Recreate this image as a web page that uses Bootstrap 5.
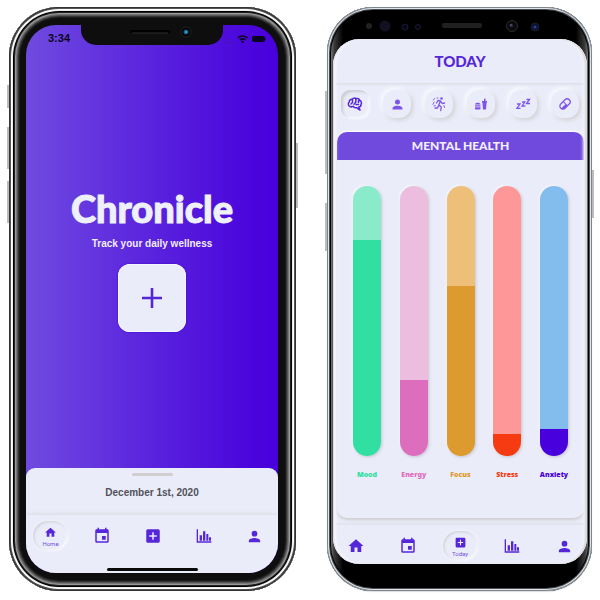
<!DOCTYPE html>
<html lang="en">
<head>
<meta charset="utf-8">
<meta name="viewport" content="width=device-width, initial-scale=1">
<title>Chronicle</title>
<link href="https://cdn.jsdelivr.net/npm/bootstrap@5.3.0/dist/css/bootstrap.min.css" rel="stylesheet">
<style>
:root { --violet: #5527d9; --soft: #eaecf9; }
body { background: #fff; font-family: Inter, "Liberation Sans", sans-serif; line-height: 1; }
.stage { min-height: 100vh; padding: 7px 8px 9px 9px; gap: 31px; grid-template-columns: 287fr 265fr; }
button { border: 0; background: none; padding: 0; color: inherit; line-height: 1; }
svg { display: block; }
.side-key { position: absolute; width: 2px; background: #b9bcc0; }
.display-face { font-family: Lato, sans-serif; font-weight: 900; margin: 0; line-height: 1; }

/* First phone */
.phone-a { border-radius: 50px; padding: 18px 18px 18px 17px; background: #0e0e0e;
  box-shadow: inset 0 0 0 1px #333, inset 0 0 0 2px #555, inset 0 0 0 3px #fff, inset 0 0 0 4px #eee, inset 0 0 0 5px #000,
    inset 0 0 0 6px #222, inset 0 0 0 7px #999, inset 0 0 0 8px #777, inset 0 0 0 9px #555, inset 0 0 0 10px #333, inset 0 0 0 11px #1c1c1c; }
.screen-a { border-radius: 30px; background: linear-gradient(90deg, #6f4be0, #5e2ade 40%, #4a05dc 90%, #4800dc); }
.notch { position: absolute; left: 50%; top: -1px; width: 142px; height: 21px; margin-left: -71px; background: #0e0e0e; border-radius: 0 0 15px 15px; }
.notch-svg { position: absolute; left: 0; top: 0; }
.status { height: 27px; padding: 0 12px 0 22px; color: #0b0420; }
.clock { font: 700 11px/13px "Liberation Sans", sans-serif; }
.brand { font-size: 38px; color: #eef0fb; -webkit-text-stroke: 1px #eef0fb; paint-order: stroke; stroke-linejoin: round; }
.tagline { font: 700 10px/12px "Liberation Sans", sans-serif; color: #f0edfc; margin: 11px 0 14px; }
.add-btn { width: 68px; height: 68px; border-radius: 12px; background: var(--soft); color: var(--violet); box-shadow: inset 0 0 0 1px #f4f5ff, 0 0 2px #3900c8; }
.sheet { background: var(--soft); border-radius: 9px 9px 0 0; height: 47px; padding-top: 5px; }
.grip { width: 41px; height: 3px; border-radius: 2px; background: #d0cecf; }
.sheet-date { font: 700 10px/14px "Liberation Sans", sans-serif; color: #515159; margin: 10px 0 0; }
.tabs-a { background: var(--soft); height: 58px; padding: 6px 6px 0 7px; box-shadow: 0 -1px 4px #d9d9e2; }
.home-bar { position: absolute; left: 50%; bottom: 2px; width: 91px; height: 3px; margin-left: -45px; border-radius: 2px; background: #090909; }

/* Tab buttons */
.tab-btn { width: 35px; height: 30px; color: var(--violet); }
.tab-btn.on { border-radius: 15px; box-shadow: inset 1px 1px 3px #cfcdd2, inset -1px -1px 2px #fff, 0 0 3px #f8f8ff; }
.tab-btn span { font: 6px/7px Roboto, sans-serif; color: #7750e0; margin-top: 1px; }

/* Second phone */
.phone-b { border-radius: 46px; padding: 32px 5px 27px 6px;
  background: linear-gradient(90deg, #777 4px, #3c3c3c 7px, #000 16px, #000 calc(100% - 16px), #3c3c3c calc(100% - 7px), #777 calc(100% - 4px));
  box-shadow: inset 0 0 0 1px #7e858c, inset 0 0 0 2px #dfe5ea, inset 0 0 0 3px #4b4f53, inset 0 0 0 4px #000, 0 1px 1px #ddd; }
.sensors { position: absolute; left: 0; right: 0; top: 9px; height: 20px; }
.screen-b { border-radius: 26px; background: var(--soft); }
.screen-b::after { content: ""; position: absolute; inset: 0; border-radius: 26px; pointer-events: none;
  box-shadow: inset 1px 0 1px #d9d9df, inset -2px 0 2px #d6d6da, inset 3px 0 3px #f7f8ff, inset -4px 0 3px #f3f4fb; }
.top-b { height: 44px; box-shadow: 0 1px 3px #d9d8df; color: var(--violet); }
.top-b h2 { font-size: 15px; }
.cats { padding: 7px 8px 0; height: 49px; }
.cat-btn { width: 28px; height: 28px; border-radius: 12px; color: #7d55ea; box-shadow: 2px 2px 4px #d3d1d6, -2px -2px 4px #fbfbff; }
.cat-btn.on { color: var(--violet); border-radius: 9px; box-shadow: inset 2px 2px 3px #cdcbd0, inset -1px -1px 2px #fafaff, 1px 1px 2px #f8f8ff; }
.panel { margin: 0 3px 7px 4px; border-radius: 10px; box-shadow: 0 2px 3px #cfcccf, 0 -1px 2px #fff; }
.panel-top { height: 28px; border-radius: 10px 10px 0 0; background: #7049dd; color: #f3f0fd; }
.panel-top h3 { font-size: 12px; }
.meters { padding: 26px 9px 39px 9px; }
.meter { width: 42px; gap: 14px; }
.meter label { font: 900 7px/9px "Noto Sans", sans-serif; color: var(--full); }
.meter input { appearance: none; -webkit-appearance: none; writing-mode: vertical-lr; direction: rtl; width: 28px; flex: 1 1 0; min-height: 120px; margin: 0; border-radius: 14px;
  background: linear-gradient(0deg, var(--full) var(--level), var(--pale) var(--level)); box-shadow: 1px 1px 3px #c4c4cc, -1px -1px 2px #fafaff; }
.meter input::-webkit-slider-thumb { -webkit-appearance: none; width: 28px; height: 4px; background: transparent; }
.meter input::-moz-range-thumb { opacity: 0; }
.mood { --full: #32dfa2; --pale: #8aebca; }
.energy { --full: #dd6ebd; --pale: #ecbddf; }
.focus-level { --full: #dc9a2f; --pale: #eebf78; }
.stress { --full: #f63a12; --pale: #fe9797; }
.anxiety { --full: #4800dc; --pale: #82bdee; }
.tabs-b { height: 39px; padding: 6px 5px 0; box-shadow: 0 -1px 3px #dddce2; }
</style>
<script src="https://cdn.jsdelivr.net/npm/bootstrap@5.3.0/dist/js/bootstrap.bundle.min.js"></script>
</head>
<body>
<svg class="d-none" aria-hidden="true">
  <symbol id="i-home" viewBox="0 0 24 24"><path fill="currentColor" d="M10 20v-6h4v6h5v-8h3L12 3 2 12h3v8z"/></symbol>
  <symbol id="i-event" viewBox="0 0 24 24"><path fill="currentColor" d="M17 12h-5v5h5v-5zM16 1v2H8V1H6v2H5c-1.1 0-2 .9-2 2v14a2 2 0 0 0 2 2h14c1.100 0 2-.9 2-2V5c0-1.100-.9-2-2-2h-1V1h-2zm3 18H5V8h14v11z"/></symbol>
  <symbol id="i-add" viewBox="0 0 24 24"><path fill="currentColor" d="M19 3H5a2 2 0 0 0-2 2v14a2 2 0 0 0 2 2h14a2 2 0 0 0 2-2V5a2 2 0 0 0-2-2zm-2 10h-4v4h-2v-4H7v-2h4V7h2v4h4v2z"/></symbol>
  <symbol id="i-chart" viewBox="0 0 24 24"><path fill="currentColor" d="M1 2h2v18h20v2H1zM5.500 11h3.500v8H5.500zM10.500 5h3.500v14h-3.500zM15.500 9h3v10h-3zM19.500 14h3v5h-3z"/></symbol>
  <symbol id="i-user" viewBox="0 0 24 24"><path fill="currentColor" d="M12 12a4 4 0 1 0 0-8 4 4 0 0 0 0 8zm0 2c-2.700 0-8 1.300-8 4v2h16v-2c0-2.700-5.300-4-8-4z"/></symbol>
</svg>

<main class="stage d-grid">
  <section class="phone-a position-relative d-flex" aria-label="Home screen">
    <i class="side-key" style="left:-2px;top:78px;height:23px"></i>
    <i class="side-key" style="left:-2px;top:120px;height:42px"></i>
    <i class="side-key" style="left:-2px;top:174px;height:42px"></i>
    <i class="side-key" style="right:-2px;top:136px;height:65px"></i>
    <div class="screen-a position-relative overflow-hidden flex-fill d-flex flex-column">
      <div class="notch">
        <svg class="notch-svg" width="142" height="21" viewBox="0 0 142 21">
          <rect x="49" y="6" width="40" height="3" rx="1.500" fill="#000"/><path d="M51 9h36" stroke="#2c2c2c"/>
          <circle cx="105" cy="8" r="5" fill="#020202" stroke="#242424"/><circle cx="105" cy="8" r="2.500" fill="#155d7a"/><circle cx="105" cy="8" r="1.200" fill="#2aa7c4"/>
        </svg>
      </div>
      <div class="status d-flex justify-content-between align-items-center">
        <span class="clock">3:34</span>
        <svg width="44" height="12" viewBox="0 0 44 12" fill="none" stroke="#0b0420">
          <path d="M1 9.500h11" stroke="#3d18a5" stroke-dasharray="2 1"/>
          <path d="M15.800 4.800a7.300 7.300 0 0 1 9.600 0M17.800 7a4.300 4.300 0 0 1 5.600 0" stroke-width="1.600"/><path d="M18.900 8.600L20.600 10.300 22.300 8.600a2.500 2.500 0 0 0-3.400 0z" fill="#0b0420" stroke="none"/>
          <rect x="30.500" y="3.500" width="12" height="5" rx="1" fill="#0b0420"/><path d="M44 5v2"/>
        </svg>
      </div>
      <div class="flex-fill d-flex flex-column align-items-center justify-content-center">
        <h1 class="display-face brand">Chronicle</h1>
        <p class="tagline">Track your daily wellness</p>
        <button type="button" class="add-btn d-flex align-items-center justify-content-center" aria-label="Add entry">
          <svg width="22" height="22" viewBox="0 0 22 22"><path d="M11 1v20M1 11h20" stroke="currentColor" stroke-width="2.600"/></svg>
        </button>
      </div>
      <div class="sheet d-flex flex-column align-items-center">
        <div class="grip"></div>
        <p class="sheet-date">December 1st, 2020</p>
      </div>
      <nav class="tabs-a position-relative d-flex justify-content-between align-items-start" aria-label="Home tabs">
        <button type="button" class="tab-btn on d-flex flex-column align-items-center justify-content-center"><svg width="13" height="13"><use href="#i-home"/></svg><span>Home</span></button>
        <button type="button" class="tab-btn d-flex align-items-center justify-content-center" aria-label="Calendar"><svg width="18" height="18"><use href="#i-event"/></svg></button>
        <button type="button" class="tab-btn d-flex align-items-center justify-content-center" aria-label="Today"><svg width="18" height="18"><use href="#i-add"/></svg></button>
        <button type="button" class="tab-btn d-flex align-items-center justify-content-center" aria-label="Charts"><svg width="16" height="16"><use href="#i-chart"/></svg></button>
        <button type="button" class="tab-btn d-flex align-items-center justify-content-center" aria-label="Profile"><svg width="17" height="17"><use href="#i-user"/></svg></button>
        <div class="home-bar"></div>
      </nav>
    </div>
  </section>

  <section class="phone-b position-relative d-flex" aria-label="Today screen">
    <i class="side-key" style="left:-2px;top:84px;height:83px"></i>
    <i class="side-key" style="left:-2px;top:196px;height:48px"></i>
    <i class="side-key" style="right:-2px;top:163px;height:48px"></i>
    <div class="sensors d-flex justify-content-center">
      <svg width="196" height="20" viewBox="0 0 196 20">
        <circle cx="7" cy="10" r="3" fill="#222"/><circle cx="23" cy="10" r="5.500" fill="#11111f"/>
        <circle cx="43" cy="11" r="3" fill="#07071a" stroke="#181838"/><circle cx="56" cy="11" r="2.500" fill="#05050f" stroke="#1b1b38"/>
        <rect x="80" y="7" width="40" height="5" rx="2" fill="#202020"/>
        <circle cx="150" cy="10" r="5.500" fill="#0b0b0d" stroke="#2c2c2c"/><circle cx="149.500" cy="9.500" r="2" fill="#1e2138"/><circle cx="149" cy="9" r=".7" fill="#8a8fa8"/>
        <circle cx="173" cy="11" r="4" fill="#0d1230" stroke="#1c1c26"/><circle cx="173" cy="11" r="1.500" fill="#24409a"/>
      </svg>
    </div>
    <div class="screen-b position-relative overflow-hidden flex-fill d-flex flex-column">
      <header class="top-b d-flex align-items-center justify-content-center"><h2 class="display-face">TODAY</h2></header>
      <div class="cats d-flex justify-content-between" role="group" aria-label="Categories">
        <button type="button" class="cat-btn on d-flex align-items-center justify-content-center" aria-label="Mental health">
          <svg width="16" height="16" viewBox="0 0 16 16" fill="none" stroke="currentColor" stroke-width="1.500" stroke-linecap="round" stroke-linejoin="round"><path d="M3 10.500C.8 9.500 1 7 2.200 6.200 2 4 4 3 5.200 3.200 6.300 1.700 8.500 2 9 2.700c1.500-.7 3.300.1 3.700 1.500 1.700.8 2.200 3 1.300 4.300 0 1.600-1 2.500-2.300 2.500L13 14l-3.500-2.300C7.500 12 6.500 11 6.300 10.200 5 11 3.800 11 3 10.500zM5.500 3.500v3L4 8M8.800 3v3.200L7 8.200M9 8.500h2.500M11.500 4.500v2"/></svg>
        </button>
        <button type="button" class="cat-btn d-flex align-items-center justify-content-center" aria-label="Physical"><svg width="15" height="15"><use href="#i-user"/></svg></button>
        <button type="button" class="cat-btn d-flex align-items-center justify-content-center" aria-label="Exercise">
          <svg width="16" height="16" viewBox="0 0 16 16" fill="none" stroke="currentColor" stroke-width="1.300" stroke-linecap="round" stroke-linejoin="round"><circle cx="10.500" cy="2.500" r="1.300" fill="currentColor" stroke="none"/><path d="M5.500 7L7 4.500l2.500.5L7.800 9l2.500 2-.6 3.500M7.600 9.500L6.500 12H4M9.500 5l1.700 2.500 2.300-.5" /><path d="M3.500 2.500L2.500 4M3 6L2 8.500M4.500 9.500l-1.500.5M13 9.500l.5 2M6 2h1" stroke-width=".9"/></svg>
        </button>
        <button type="button" class="cat-btn d-flex align-items-center justify-content-center" aria-label="Food and drink">
          <svg width="14" height="14" viewBox="0 0 14 14" fill="currentColor"><path d="M1 7.500C1 5 6.500 5 6.500 7.500zM1 8.300h5.500v1.200H1zM1 10.300h5.500v1.400c0 .5-.4.800-.8.800H1.800c-.5 0-.8-.3-.8-.8zM8 4h2V2l1.500-.8v2.800H13v1.500h-.4l-.6 7H9l-.6-7H8z"/></svg>
        </button>
        <button type="button" class="cat-btn d-flex align-items-center justify-content-center" aria-label="Sleep">
          <svg width="15" height="14" viewBox="0 0 15 14" fill="none" stroke="currentColor" stroke-width="1.300"><path d="M1 7h3L1 11.300h3.500M6 5h2.800L6 9h3.300M10.500 2.500h3l-3 4H14"/></svg>
        </button>
        <button type="button" class="cat-btn d-flex align-items-center justify-content-center" aria-label="Medication">
          <svg width="14" height="14" viewBox="0 0 14 14"><g transform="rotate(-45 7 7)"><rect x="1" y="4" width="12" height="6" rx="3" fill="none" stroke="currentColor" stroke-width="1.300"/><path d="M7 7.500V10H4c-1.700 0-3-1.300-3-2.500zM7 4h1v6H7z" fill="currentColor"/></g></svg>
        </button>
      </div>
      <section class="panel flex-fill d-flex flex-column">
        <div class="panel-top d-flex align-items-center justify-content-center"><h3 class="display-face">MENTAL HEALTH</h3></div>
        <div class="meters flex-fill d-flex justify-content-between">
          <div class="meter mood d-flex flex-column align-items-center"><input type="range" id="mood" value="80" style="--level:80%"><label for="mood">Mood</label></div>
          <div class="meter energy d-flex flex-column align-items-center"><input type="range" id="energy" value="28" style="--level:28%"><label for="energy">Energy</label></div>
          <div class="meter focus-level d-flex flex-column align-items-center"><input type="range" id="focus" value="63" style="--level:63%"><label for="focus">Focus</label></div>
          <div class="meter stress d-flex flex-column align-items-center"><input type="range" id="stress" value="8" style="--level:8%"><label for="stress">Stress</label></div>
          <div class="meter anxiety d-flex flex-column align-items-center"><input type="range" id="anxiety" value="10" style="--level:10%"><label for="anxiety">Anxiety</label></div>
        </div>
      </section>
      <nav class="tabs-b d-flex justify-content-between align-items-start" aria-label="Today tabs">
        <button type="button" class="tab-btn d-flex align-items-center justify-content-center" aria-label="Home"><svg width="18" height="18"><use href="#i-home"/></svg></button>
        <button type="button" class="tab-btn d-flex align-items-center justify-content-center" aria-label="Calendar"><svg width="18" height="18"><use href="#i-event"/></svg></button>
        <button type="button" class="tab-btn on d-flex flex-column align-items-center justify-content-center"><svg width="13" height="13"><use href="#i-add"/></svg><span>Today</span></button>
        <button type="button" class="tab-btn d-flex align-items-center justify-content-center" aria-label="Charts"><svg width="16" height="16"><use href="#i-chart"/></svg></button>
        <button type="button" class="tab-btn d-flex align-items-center justify-content-center" aria-label="Profile"><svg width="17" height="17"><use href="#i-user"/></svg></button>
      </nav>
    </div>
  </section>
</main>
</body>
</html>
